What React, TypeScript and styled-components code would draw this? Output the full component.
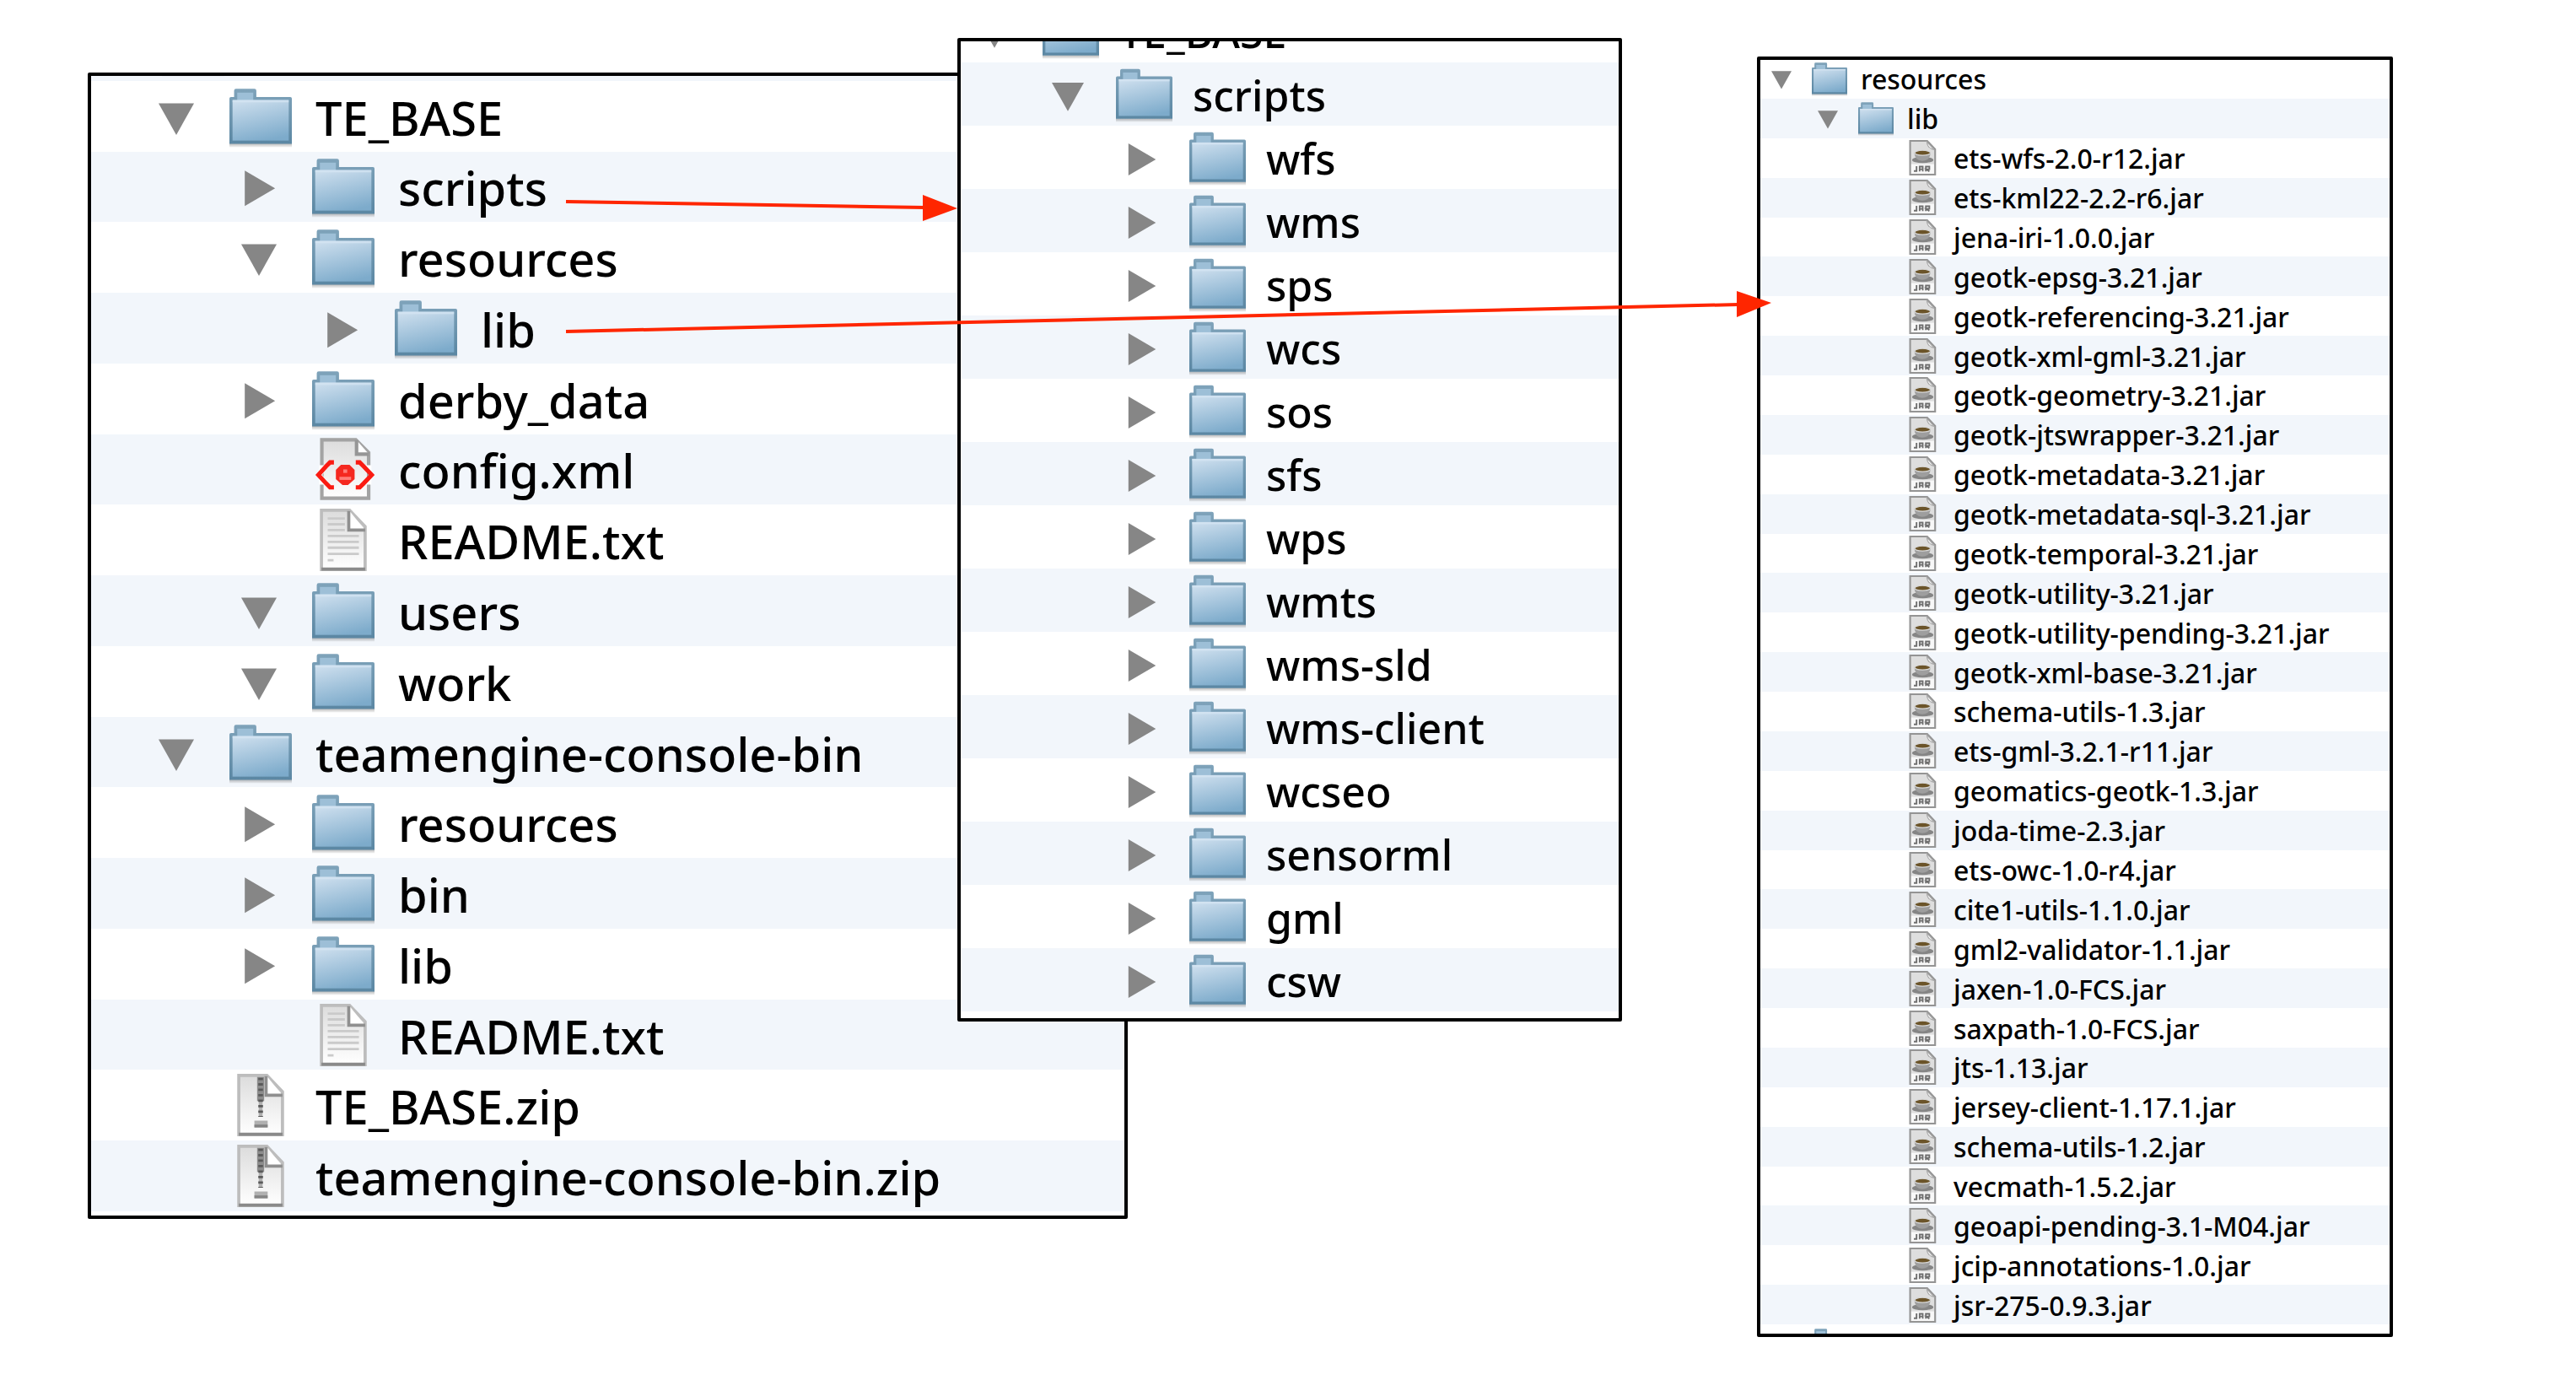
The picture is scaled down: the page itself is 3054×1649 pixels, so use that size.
import React from "react";
import styled, { createGlobalStyle, ThemeProvider } from "styled-components";

type Kind = "folder" | "xml" | "text" | "zip" | "jar";
type Entry = { name: string; kind: Kind; level: number; open?: boolean; bare?: boolean };

const Global = createGlobalStyle`
  body { margin: 0; background: #fff; }
`;

const Canvas = styled.main`
  position: relative;
  min-height: 100vh;
  overflow: hidden;
  font-family: "Noto Sans", "Open Sans", sans-serif;
  color: #000;
`;

const Panel = styled.section<{ $x: number; $y: number; $w: number; $h: number }>`
  position: absolute;
  left: ${(p) => p.$x}px;
  top: ${(p) => p.$y}px;
  width: ${(p) => p.$w}px;
  height: ${(p) => p.$h}px;
  box-sizing: border-box;
  border: 4px solid #000;
  border-radius: 2px;
  background: #fff;
  overflow: hidden;
`;

const Tree = styled.ul`
  display: grid;
  grid-auto-rows: 1fr;
  height: ${(p) => p.theme.listHeight}px;
  margin: ${(p) => p.theme.scrolled}px 0 0;
  padding: 0;
  list-style: none;
`;

const Row = styled.li<{ $level: number; $shaded: boolean }>`
  display: flex;
  align-items: center;
  min-height: 0;
  padding-left: ${(p) => p.theme.inset + p.$level * p.theme.indent}px;
  background: ${(p) => (p.$shaded ? "#f2f6fb" : "#fff")};
`;

const Toggle = styled.button`
  display: block;
  flex: none;
  width: ${(p) => p.theme.toggle}px;
  height: ${(p) => p.theme.toggle}px;
  padding: 0;
  border: 0;
  background: none;
`;

const ToggleSpace = styled.span`
  flex: none;
  width: ${(p) => p.theme.toggle}px;
`;

const Icon = styled.svg`
  display: block;
  flex: none;
  width: ${(p) => p.theme.icon}px;
  height: ${(p) => p.theme.icon}px;
  margin-left: ${(p) => p.theme.toggle}px;
`;

const Triangle = styled.svg`
  display: block;
  width: 100%;
  height: 100%;
  overflow: visible;
`;

const Label = styled.span`
  margin-left: ${(p) => p.theme.gap}px;
  padding-top: 2px;
  font-size: ${(p) => p.theme.font}px;
  font-weight: 500;
  line-height: 1;
  white-space: nowrap;
`;

const Arrows = styled.svg`
  position: absolute;
  left: 0;
  top: 0;
  width: 100%;
  height: 100%;
  pointer-events: none;
`;

const Gradients = styled.svg`
  position: absolute;
  width: 0;
  height: 0;
`;

function Defs() {
  return (
    <Gradients aria-hidden="true">
      <defs>
        <linearGradient id="folderFill" x1="0.3" y1="0" x2="0.6" y2="1">
          <stop offset="0" stopColor="#c9dcec" />
          <stop offset="1" stopColor="#7dabcb" />
        </linearGradient>
        <linearGradient id="folderEdge" x1="0" y1="0" x2="0" y2="1">
          <stop offset="0" stopColor="#7fa3ba" />
          <stop offset="1" stopColor="#5b87a3" />
        </linearGradient>
        <linearGradient id="shadow" x1="0" y1="0" x2="0" y2="1">
          <stop offset="0" stopColor="#000" stopOpacity="0.28" />
          <stop offset="1" stopColor="#000" stopOpacity="0.04" />
        </linearGradient>
        <linearGradient id="paper" x1="0" y1="0" x2="0" y2="1">
          <stop offset="0" stopColor="#dcdcdc" />
          <stop offset="1" stopColor="#ffffff" />
        </linearGradient>
      </defs>
    </Gradients>
  );
}

function FolderArt() {
  return (
    <>
      <rect x="0" y="14.9" width="16" height="1" fill="url(#shadow)" />
      <path d="M1.2 3V1.4Q1.2 0.9 1.7 0.9H6.4Q6.9 0.9 6.9 1.4V3H15.6Q16 3 16 3.4V15H0V3.4Q0 3 0.4 3Z" fill="url(#folderEdge)" />
      <rect x="2" y="1.9" width="4.1" height="2" fill="#9dbfd7" />
      <rect x="0.8" y="3.8" width="14.4" height="10.4" fill="url(#folderFill)" />
      <rect x="0.8" y="3.8" width="14.4" height="0.6" fill="#d6e6f3" opacity="0.7" />
    </>
  );
}

function XmlArt() {
  return (
    <>
      <path d="M2.5 0.5H11.2L14.5 3.8V15.5H2.5Z" fill="url(#paper)" stroke="#a3a3a3" strokeWidth="0.9" />
      <path d="M11.4 0.6V4.2H14.6" fill="#fff" stroke="#969696" strokeWidth="0.9" />
      <path d="M1.8 7H4.5L2.6 9.5L4.5 12H1.8ZM15.2 7H13L14.6 9.5L13 12H15.2Z" fill="#fff" />
      <path d="M5.6 6.3H4.6L3.6 7.3L1.6 9.5L3.6 11.7L4.6 12.7H5.6" fill="none" stroke="#fa1b12" strokeWidth="1.1" />
      <path d="M11.2 6.3H12.2L13.2 7.3L15.3 9.5L13.2 11.7L12.2 12.7H11.2" fill="none" stroke="#fa1b12" strokeWidth="1.1" />
      <path d="M7.4 6.9H9.6L10.9 8.2V10.6L9.2 12.1H7.8L6.1 10.6V8.2Z" fill="#f5281f" />
      <rect x="8" y="8.1" width="1" height="0.9" fill="#ff7d78" />
      <rect x="7" y="10" width="3" height="0.8" fill="#ff7d78" />
    </>
  );
}

function PageArt() {
  return (
    <>
      <path d="M2.4 0.4H9.6L13.6 4.6V15.6H2.4Z" fill="url(#paper)" stroke="#bdbdbd" strokeWidth="0.8" />
      <path d="M9.6 0.6V5.4H13.5Z" fill="#fff" />
      <path d="M9.4 0.6V5.5H13.6" fill="none" stroke="#8f8f8f" strokeWidth="0.8" />
      <path d="M2.4 15.5H13.6" stroke="#8a8a8a" strokeWidth="0.8" />
    </>
  );
}

function TextArt() {
  return (
    <>
      <PageArt />
      <path d="M4 2.5H8.4M4 4H8.4M4 5.5H8.4M4 7H12M4 8.5H12M4 10H12M4 11.6H12M4 13.2H5.5" stroke="#cacaca" strokeWidth="0.6" />
    </>
  );
}

function ZipArt() {
  return (
    <>
      <PageArt />
      <path d="M8 0.8V7" stroke="#8c8c8c" strokeWidth="1.8" />
      <path d="M8 7V11" stroke="#b0b0b0" strokeWidth="1" />
      <path d="M8 1V11" stroke="#5a5a5a" strokeWidth="1.2" strokeDasharray="0.6 0.8" />
      <rect x="6.4" y="12" width="3.4" height="1.8" fill="#b0b0b0" />
      <rect x="6.4" y="13" width="3.4" height="0.7" fill="#848484" />
    </>
  );
}

function JarArt() {
  return (
    <>
      <path d="M2.5 0.4H10.2L13.8 4.2V15.6H2.5Z" fill="#dedede" stroke="#949494" strokeWidth="0.8" />
      <path d="M10 0.8Q10.4 3.8 13.3 4.4Z" fill="#fff" stroke="#aaa" strokeWidth="0.4" />
      <rect x="3" y="10.9" width="10.3" height="4.3" fill="#f8f8f8" />
      <ellipse cx="8.2" cy="9" rx="4.8" ry="1.4" fill="#858585" />
      <path d="M4.4 5.6Q4.6 9.4 8 9.4T11.8 5.6Z" fill="#9e9e9e" />
      <ellipse cx="8.1" cy="5.8" rx="3.5" ry="1.1" fill="#6b5429" stroke="#d8d8d8" strokeWidth="0.4" />
      <path d="M5.4 11.8V14H4.2M6.8 14.2V12H8.2V14.2M6.8 13.2H8.2M9.6 14.2V12H11.2V13.2H9.8L11.2 14.2" fill="none" stroke="#6e6e6e" strokeWidth="0.7" />
    </>
  );
}

const art: Record<Kind, () => React.ReactElement> = {
  folder: FolderArt,
  xml: XmlArt,
  text: TextArt,
  zip: ZipArt,
  jar: JarArt,
};

function TreeRow({ entry, shaded }: { entry: Entry; shaded: boolean }) {
  const Art = art[entry.kind];
  return (
    <Row $level={entry.level} $shaded={shaded}>
      {entry.kind === "folder" && !entry.bare ? (
        <Toggle type="button" aria-label={entry.name} aria-expanded={!!entry.open}>
          <Triangle viewBox="0 0 9 9" aria-hidden="true">
            <path d={entry.open ? "M0 1.2H9L4.5 9.2Z" : "M0.9 0.5V9.5L8.6 5Z"} fill="#868686" />
          </Triangle>
        </Toggle>
      ) : (
        <ToggleSpace />
      )}
      <Icon viewBox="0 0 16 16" aria-hidden="true">
        <Art />
      </Icon>
      {entry.name && <Label>{entry.name}</Label>}
    </Row>
  );
}

const folder = (name: string, level: number, open = false): Entry => ({ name, kind: "folder", level, open });
const clipped = (level: number): Entry => ({ name: "", kind: "folder", level, bare: true });

const baseEntries: Entry[] = [
  clipped(-1),
  folder("TE_BASE", 0, true),
  folder("scripts", 1),
  folder("resources", 1, true),
  folder("lib", 2),
  folder("derby_data", 1),
  { name: "config.xml", kind: "xml", level: 1 },
  { name: "README.txt", kind: "text", level: 1 },
  folder("users", 1, true),
  folder("work", 1, true),
  folder("teamengine-console-bin", 0, true),
  folder("resources", 1),
  folder("bin", 1),
  folder("lib", 1),
  { name: "README.txt", kind: "text", level: 1 },
  { name: "TE_BASE.zip", kind: "zip", level: 0 },
  { name: "teamengine-console-bin.zip", kind: "zip", level: 0 },
];

const scriptEntries: Entry[] = [
  folder("TE_BASE", 0, true),
  folder("scripts", 1, true),
  ...["wfs", "wms", "sps", "wcs", "sos", "sfs", "wps", "wmts", "wms-sld", "wms-client", "wcseo", "sensorml", "gml", "csw"].map(
    (n) => folder(n, 2)
  ),
];

const jars = [
  "ets-wfs-2.0-r12", "ets-kml22-2.2-r6", "jena-iri-1.0.0", "geotk-epsg-3.21", "geotk-referencing-3.21",
  "geotk-xml-gml-3.21", "geotk-geometry-3.21", "geotk-jtswrapper-3.21", "geotk-metadata-3.21",
  "geotk-metadata-sql-3.21", "geotk-temporal-3.21", "geotk-utility-3.21", "geotk-utility-pending-3.21",
  "geotk-xml-base-3.21", "schema-utils-1.3", "ets-gml-3.2.1-r11", "geomatics-geotk-1.3", "joda-time-2.3",
  "ets-owc-1.0-r4", "cite1-utils-1.1.0", "gml2-validator-1.1", "jaxen-1.0-FCS", "saxpath-1.0-FCS", "jts-1.13",
  "jersey-client-1.17.1", "schema-utils-1.2", "vecmath-1.5.2", "geoapi-pending-3.1-M04",
  "jcip-annotations-1.0", "jsr-275-0.9.3",
];

const libEntries: Entry[] = [
  folder("resources", 0, true),
  folder("lib", 1, true),
  ...jars.map((n): Entry => ({ name: n + ".jar", kind: "jar", level: 2 })),
  clipped(0),
];

const large = { listHeight: 1424, scrolled: -78, inset: 80, indent: 98, toggle: 42, icon: 74, gap: 28, font: 56 };
const medium = { listHeight: 1200, scrolled: -50, inset: 21, indent: 87, toggle: 38, icon: 67, gap: 24, font: 50 };
const small = { listHeight: 1547, scrolled: -1, inset: 13, indent: 55, toggle: 24, icon: 42, gap: 16, font: 32 };

function FilePanel(props: {
  label: string;
  box: [number, number, number, number];
  metrics: typeof large;
  entries: Entry[];
  firstShaded?: boolean;
}) {
  const [x, y, w, h] = props.box;
  return (
    <ThemeProvider theme={props.metrics}>
      <Panel $x={x} $y={y} $w={w} $h={h} aria-label={props.label}>
        <Tree>
          {props.entries.map((e, i) => (
            <TreeRow key={i} entry={e} shaded={i % 2 === (props.firstShaded ? 0 : 1)} />
          ))}
        </Tree>
      </Panel>
    </ThemeProvider>
  );
}

export default function App() {
  return (
    <Canvas>
      <Global />
      <Defs />
      <FilePanel label="TE_BASE" box={[104, 86, 1233, 1359]} metrics={large} entries={baseEntries} firstShaded />
      <FilePanel label="scripts" box={[1135, 45, 788, 1166]} metrics={medium} entries={scriptEntries} />
      <FilePanel label="resources" box={[2083, 67, 754, 1518]} metrics={small} entries={libEntries} />
      <Arrows aria-hidden="true">
        <g stroke="#ff2600" strokeWidth="4" fill="#ff2600">
          <path d="M671 239L1096 246" />
          <path d="M671 393L2061 361" />
          <path d="M1094 231L1135 247L1094 262Z" stroke="none" />
          <path d="M2059 345L2100 359L2059 376Z" stroke="none" />
        </g>
      </Arrows>
    </Canvas>
  );
}
